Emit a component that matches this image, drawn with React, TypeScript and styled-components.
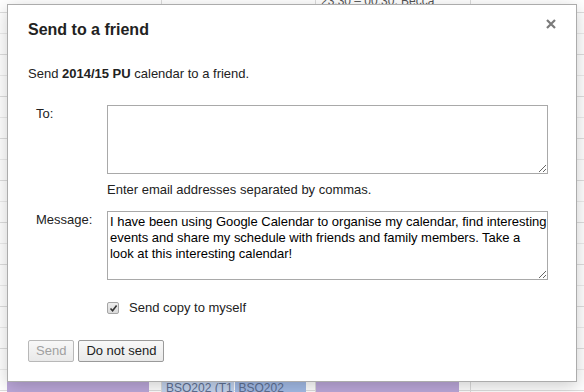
import React from "react";
import styled, { createGlobalStyle } from "styled-components";

const GlobalStyle = createGlobalStyle`
  html, body {
    margin: 0;
    padding: 0;
    background: #fff;
  }
  body {
    font-family: "Liberation Sans", Arial, sans-serif;
    color: #222;
  }
`;

const Screen = styled.div`
  position: relative;
  width: 584px;
  height: 392px;
  overflow: hidden;
  background: #fff;
`;

const CalendarGrid = styled.div`
  display: grid;
  grid-template-columns: 161px 154px 155px 1fr;
  height: 100%;
  background-image: repeating-linear-gradient(
    to bottom,
    transparent 0,
    transparent 12px,
    #dedede 12px,
    #dedede 13px,
    transparent 13px,
    transparent 33px,
    #ececec 33px,
    #ececec 34px,
    transparent 34px,
    transparent 42px
  );
`;

const DayColumn = styled.div<{ $first?: boolean }>`
  display: flex;
  flex-direction: column;
  border-left: ${(p) => (p.$first ? "none" : "1px solid #dcdcdc")};
  min-width: 0;
`;

const CutLabel = styled.div`
  margin-top: -5px;
  padding-left: 5px;
  font-size: 12px;
  line-height: 12px;
  color: #555;
  white-space: nowrap;
`;

const EventRow = styled.div<{ $left: number; $right: number }>`
  display: flex;
  gap: 1px;
  margin-top: auto;
  height: 12px;
  margin-left: ${(p) => p.$left}px;
  margin-right: ${(p) => p.$right}px;
`;

const EventBlock = styled.div<{ $tone: "purple" | "pale" | "blue" }>`
  flex: 1;
  overflow: hidden;
  white-space: nowrap;
  padding: 2px 0 0 4px;
  font-size: 12px;
  line-height: 13px;
  color: #5d6f92;
  background: ${(p) =>
    p.$tone === "purple" ? "#bca8da" : p.$tone === "pale" ? "#c4d4ee" : "#a3bbe6"};
`;

const Dialog = styled.div`
  position: absolute;
  left: 7px;
  top: 4px;
  width: 570px;
  box-sizing: border-box;
  padding: 15px 20px 19px;
  background: #fff;
  border: 1px solid #acacac;
  box-shadow: 0 4px 16px rgba(0, 0, 0, 0.2);
`;

const CloseButton = styled.button`
  position: absolute;
  top: 14px;
  right: 20px;
  width: 10px;
  height: 10px;
  padding: 0;
  border: none;
  background: none;
  display: flex;
  cursor: pointer;
`;

const Title = styled.h2`
  margin: 0;
  font-size: 16px;
  line-height: 20px;
  font-weight: bold;
  color: #222;
`;

const Intro = styled.p`
  margin: 26px 0 0;
  font-size: 13px;
  line-height: 16px;
`;

const FieldRow = styled.div<{ $gap: number }>`
  display: grid;
  grid-template-columns: 79px 441px;
  margin-top: ${(p) => p.$gap}px;
`;

const FieldLabel = styled.label`
  padding: 1px 0 0 8px;
  font-size: 13px;
  line-height: 16px;
`;

const TextBox = styled.textarea`
  display: block;
  box-sizing: border-box;
  width: 441px;
  height: 69px;
  margin: 0;
  padding: 2px 0 2px 2px;
  border: 1px solid #a9a9a9;
  border-radius: 0;
  font-family: "Liberation Sans", Arial, sans-serif;
  font-size: 13px;
  line-height: 16px;
  letter-spacing: -0.02px;
  color: #000;
  outline: none;
`;

const Hint = styled.div`
  grid-column: 2;
  font-size: 13px;
  line-height: 16px;
`;

const CheckRow = styled.label`
  grid-column: 2;
  display: flex;
  align-items: center;
  gap: 10px;
  font-size: 13px;
  line-height: 16px;
`;

const CheckBox = styled.span`
  width: 12px;
  height: 12px;
  box-sizing: border-box;
  border: 1px solid #a5a5a5;
  border-radius: 2px;
  background: linear-gradient(#ededed, #dadada);
  display: flex;
  align-items: center;
  justify-content: center;
`;

const ButtonBar = styled.div`
  display: flex;
  gap: 4px;
  margin-top: 24px;
`;

const Button = styled.button`
  height: 22px;
  margin: 0;
  padding: 0 7px;
  border: 1px solid ${(p) => (p.disabled ? "#b8b8b8" : "#9a9a9a")};
  border-radius: 2px;
  background: linear-gradient(#f8f8f8, #e9e9e9);
  font-family: "Liberation Sans", Arial, sans-serif;
  font-size: 13px;
  line-height: 20px;
  color: ${(p) => (p.disabled ? "#a0a0a0" : "#222")};
`;

const message =
  "I have been using Google Calendar to organise my calendar, find interesting events and share my schedule with friends and family members. Take a look at this interesting calendar!";

const App = () => {
  return (
    <Screen>
      <GlobalStyle />
      <CalendarGrid>
        <DayColumn $first>
          <EventRow $left={7} $right={12}>
            <EventBlock $tone="purple" />
          </EventRow>
        </DayColumn>
        <DayColumn>
          <EventRow $left={0} $right={9}>
            <EventBlock $tone="pale">BSO202 (T1</EventBlock>
            <EventBlock $tone="blue">BSO202</EventBlock>
          </EventRow>
        </DayColumn>
        <DayColumn>
          <CutLabel>23:30 – 00:30, Becca</CutLabel>
          <EventRow $left={0} $right={11}>
            <EventBlock $tone="purple" />
          </EventRow>
        </DayColumn>
        <DayColumn />
      </CalendarGrid>

      <Dialog>
        <CloseButton aria-label="Close">
          <svg width="10" height="10" viewBox="0 0 10 10">
            <path d="M1 1 L9 9 M9 1 L1 9" stroke="#7a7a7a" strokeWidth="2.2" />
          </svg>
        </CloseButton>
        <Title>Send to a friend</Title>
        <Intro>
          Send <b>2014/15 PU</b> calendar to a friend.
        </Intro>

        <FieldRow $gap={23}>
          <FieldLabel htmlFor="to">To:</FieldLabel>
          <TextBox id="to" />
        </FieldRow>
        <FieldRow $gap={8}>
          <Hint>Enter email addresses separated by commas.</Hint>
        </FieldRow>
        <FieldRow $gap={13}>
          <FieldLabel htmlFor="msg">Message:</FieldLabel>
          <TextBox id="msg" defaultValue={message} />
        </FieldRow>
        <FieldRow $gap={20}>
          <CheckRow>
            <CheckBox>
              <svg width="9" height="9" viewBox="0 0 9 9">
                <path d="M1.5 4.5 L3.6 6.8 L7.6 1.6" fill="none" stroke="#333" strokeWidth="1.6" />
              </svg>
            </CheckBox>
            Send copy to myself
          </CheckRow>
        </FieldRow>

        <ButtonBar>
          <Button disabled>Send</Button>
          <Button>Do not send</Button>
        </ButtonBar>
      </Dialog>
    </Screen>
  );
};

export default App;
